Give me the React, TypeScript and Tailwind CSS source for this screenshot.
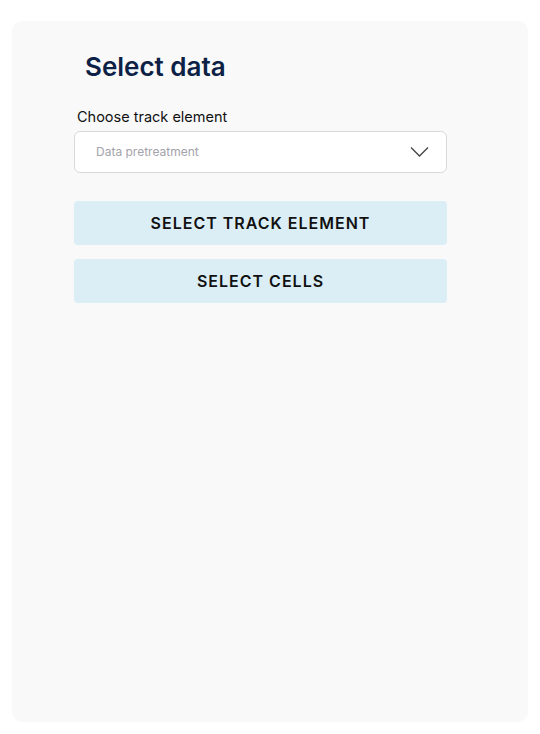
export default function App() {
  return (
    <div className="min-h-[734px] bg-white px-3 pt-[21px] pb-3 font-['Inter',sans-serif]">
      <div className="h-[701px] rounded-[10px] bg-[#f9f9f9] pt-[30px]">
        <h1 className="pl-[73px] text-[26px] leading-[32px] font-semibold text-[#0c2145]">Select data</h1>
        <div className="mt-[25px] w-[373px] ml-[62px]">
          <label className="block pl-[3px] text-[14.5px] leading-[18px] text-[#111]">Choose track element</label>
          <button className="mt-[5px] flex h-[42px] w-full items-center justify-between rounded-[6px] border border-[#d9d9d9] bg-white pl-[21px] pr-[17px]">
            <span className="text-[12px] text-[#a3a3ab]">Data pretreatment</span>
            <svg width="19" height="12" viewBox="0 0 19 12" fill="none" className="text-[#444]">
              <path d="M1 1.5 L9.5 10 L18 1.5" stroke="currentColor" strokeWidth="1.3" />
            </svg>
          </button>
          <div className="mt-[28px] flex flex-col gap-[14px]">
            <button className="h-[44px] w-full rounded-[4px] bg-[#dbeef6] text-[16px] font-semibold tracking-[1px] text-[#111]">
              SELECT TRACK ELEMENT
            </button>
            <button className="h-[44px] w-full rounded-[4px] bg-[#dbeef6] text-[16px] font-semibold tracking-[1px] text-[#111]">
              SELECT CELLS
            </button>
          </div>
        </div>
      </div>
    </div>
  );
}
